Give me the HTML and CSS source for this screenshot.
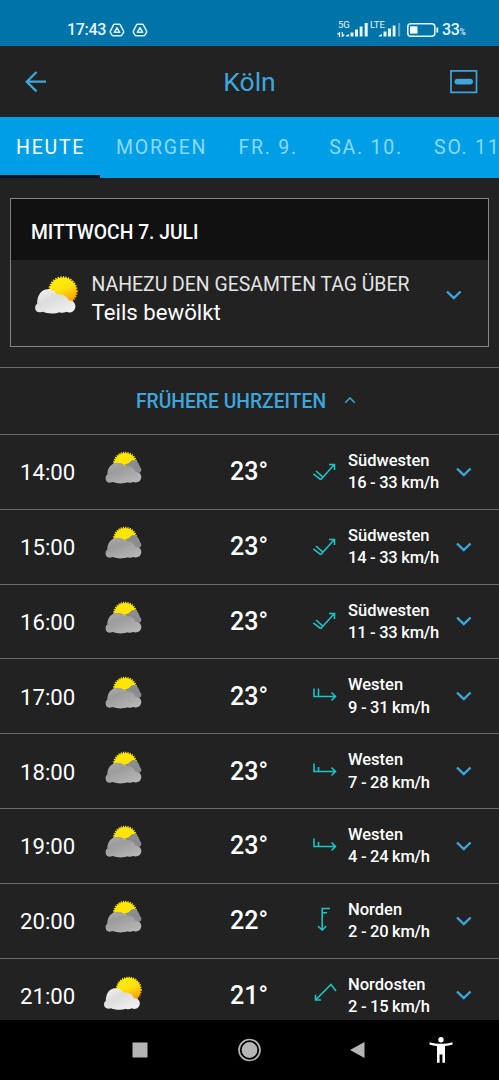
FILE: index.html
```
<!DOCTYPE html>
<html lang="de">
<head>
    <meta charset="UTF-8">
    <meta name="viewport" content="width=device-width, initial-scale=1.0">
    <title>Wetter Köln</title>
    <link rel="stylesheet" href="styles.css">
</head>
<body>

    <!-- Shared icons -->
    <svg class="icon-defs" width="0" height="0">
        <defs>
            <linearGradient id="sunFill" x1="0" y1="0" x2="0.4" y2="1">
                <stop offset="0" stop-color="#fff200"/>
                <stop offset="0.55" stop-color="#ffe010"/>
                <stop offset="1" stop-color="#ffa200"/>
            </linearGradient>
            <linearGradient id="greyCloud" x1="0" y1="0" x2="0.7" y2="1">
                <stop offset="0" stop-color="#acacac"/>
                <stop offset="0.4" stop-color="#9c9c9c"/>
                <stop offset="1" stop-color="#b6b6b6"/>
            </linearGradient>
            <linearGradient id="whiteCloud" x1="0" y1="0" x2="0.7" y2="1">
                <stop offset="0" stop-color="#f4f4f4"/>
                <stop offset="0.45" stop-color="#dcdcdc"/>
                <stop offset="1" stop-color="#f0f0f0"/>
            </linearGradient>
        </defs>
        <symbol id="cloudy" viewBox="0.3 0 40 40">
            <circle cx="22.5" cy="16" r="11" fill="#ffe600"/>
            <circle cx="22.5" cy="16" r="11.3" fill="none" stroke="#ffe600" stroke-width="1.8" stroke-dasharray="1.2 1.1"/>
            <g transform="translate(0 -0.8) scale(1 0.97)">
                <path d="M22 17.5C24.5 17.5 26.5 16.5 28 14.5C30 12.3 34 13 35.7 16.5C36.5 18 37 19.5 37.3 20.5C39.2 22.5 39 24.5 37.5 26L28 27Z" fill="#8b8c90"/>
                <path d="M8 36.5C5.5 37 3 35.3 2.9 32.5C2.8 30.5 3.4 29 4.6 28.2C4.6 21 9 16 15 16C18.5 16 21.5 17.5 23 20C27 19 31.5 21 32.7 25.5C36 25.2 38.6 27.3 38.6 30.5C38.6 34 36.3 36.4 33 36.4C32 36.4 31 36.2 30.2 35.9C28.8 36.9 26.5 37 25 36.2C21 37.8 14 37.8 10 36C9.5 36.3 8.8 36.5 8 36.5Z" fill="url(#greyCloud)"/>
            </g>
        </symbol>
        <symbol id="partly" viewBox="0 -3 40 40">
            <circle cx="25.7" cy="14.8" r="12" fill="url(#sunFill)"/>
            <circle cx="25.7" cy="14.8" r="12.3" fill="none" stroke="url(#sunFill)" stroke-width="1.7" stroke-dasharray="1.2 1.1"/>
            <path d="M6 33.7C3.2 34 1 32.3 1 29.6C1 27.8 1.7 26.6 2.8 26C2.7 18.5 6.7 13.2 12.3 13.2C16 13.2 19 15 20.3 17.7C25.3 17 29.8 19.3 30.8 23.3C34.3 22.9 36.8 25.3 36.8 28.3C36.8 31.6 34.5 33.9 31.5 33.9C30.5 33.9 29.5 33.7 28.7 33.2C27 34.4 24.5 34.5 22.8 33.7C18.5 35.2 12 35.2 8 33.3Z" fill="url(#whiteCloud)"/>
        </symbol>
        <symbol id="windSW2" viewBox="0 0 28 28">
            <path d="M10.7 21.7L24.3 6.5M19 6.5H24.5V12M10.7 21.7L3.3 15.8M12.9 19.2L6 13"/>
        </symbol>
        <symbol id="windW2" viewBox="0 0 28 28">
            <path d="M4 6.5V14.5H25.5M21.5 10.5L25.5 14.5L21.5 18.5M8.5 6.5V14.5"/>
        </symbol>
        <symbol id="windW1" viewBox="0 0 28 28">
            <path d="M4 6.5V14.5H25.5M21.5 10.5L25.5 14.5L21.5 18.5M8.5 10V14.5"/>
        </symbol>
        <symbol id="windN" viewBox="0 0 28 28">
            <path d="M20 1.5H12.2V23M8 19L12.2 23.2L16.3 19M12.2 5.7H17"/>
        </symbol>
        <symbol id="windNE" viewBox="0 0 28 28">
            <path d="M26 10L21 3.5L5.5 19M5.5 13.7V19H11"/>
        </symbol>
        <symbol id="down" viewBox="0 0 16 10">
            <path d="M1 1.5L7.8 8L14.6 1.5" fill="none" stroke="#3ea6dc" stroke-width="2.4"/>
        </symbol>
        <symbol id="drive" viewBox="0 0 16 14">
            <path d="M5.3 1.2H10.3Q10.9 1.2 11.3 1.9L14.6 8.2Q14.9 8.9 14.5 9.5L12.8 12.2Q12.4 12.8 11.7 12.8H4.1Q3.4 12.8 3 12.2L1.4 9.5Q1 8.9 1.4 8.2L4.5 1.9Q4.8 1.2 5.3 1.2Z M8 4.7L5.3 9.3H10.7Z" fill="none" stroke="#d7f0fb" stroke-width="1.5" stroke-linejoin="round"/>
        </symbol>
    </svg>

    <div class="status-bar">
        <span class="clock">17:43</span>
        <svg class="drive" width="16" height="14"><use href="#drive"/></svg>
        <svg class="drive" width="16" height="14"><use href="#drive"/></svg>
        <div class="status-right">
            <div class="signal">
                <span class="net">5G</span>
                <svg width="32" height="16" viewBox="0 0 32 16" fill="#e4f5fc">
                    <path d="M2.5 10V15M0.5 12.5L2.5 10.5M5.3 10V15M7.3 12.5L5.3 14.5" fill="none" stroke="#e4f5fc" stroke-width="1.2"/>
                    <path d="M9 14.5V13.5L12 12V14.5ZM13.5 10.5H16.5V14.5H13.5ZM18 7.5H21V14.5H18ZM22.7 4.5H25.5V14.5H22.7ZM27.7 1H30.7V14.5H27.7Z"/>
                </svg>
            </div>
            <div class="signal lte">
                <span class="net">LTE</span>
                <svg width="32" height="16" viewBox="0 0 32 16" fill="#e4f5fc">
                    <path d="M9 14.5V13.5L12 12V14.5ZM13.5 9.5H16.5V14.5H13.5ZM18 6.5H21V14.5H18ZM22.7 3.5H25.5V14.5H22.7Z"/>
                    <path d="M28 1H30.2V14.5H28Z" opacity="0.4"/>
                </svg>
            </div>
            <svg class="battery" width="32" height="14" viewBox="0 0 32 14">
                <rect x="0.8" y="0.8" width="27" height="12.4" rx="3" fill="none" stroke="#e4f5fc" stroke-width="1.6"/>
                <rect x="3" y="3.3" width="7.5" height="7.3" fill="#f4fbfe"/>
                <path d="M30.3 4.5V9.5" stroke="#e4f5fc" stroke-width="1.8"/>
            </svg>
            <span class="percent">33<small>%</small></span>
        </div>
    </div>

    <header class="header">
        <svg width="22" height="22" viewBox="0 0 22 22" fill="none" stroke="#3ea6dc" stroke-width="2.3">
            <path d="M21 10.7H2M11.5 1L1.8 10.7L11.5 20.4"/>
        </svg>
        <h1>Köln</h1>
        <svg width="28" height="24" viewBox="0 0 28 24">
            <rect x="1" y="0.9" width="25.5" height="21.5" fill="none" stroke="#3ea6dc" stroke-width="1.7"/>
            <rect x="4.5" y="8.7" width="18.5" height="5.8" rx="2.9" fill="#3ea6dc"/>
        </svg>
    </header>

    <nav class="tabs">
        <a class="tab active">HEUTE</a>
        <a class="tab">MORGEN</a>
        <a class="tab">FR. 9.</a>
        <a class="tab">SA. 10.</a>
        <a class="tab">SO. 11</a>
    </nav>

    <main>
        <section class="day-card">
            <h2>MITTWOCH 7. JULI</h2>
            <div class="summary">
                <svg class="day-icon" width="45" height="45"><use href="#partly"/></svg>
                <div class="summary-text">
                    <div class="period">NAHEZU DEN GESAMTEN TAG ÜBER</div>
                    <div class="condition">Teils bewölkt</div>
                </div>
                <svg class="chevron" width="16" height="10"><use href="#down"/></svg>
            </div>
        </section>

        <div class="earlier">
            <span>FRÜHERE UHRZEITEN</span>
            <svg width="12" height="8" viewBox="0 0 12 8" fill="none" stroke="#3ea6dc" stroke-width="1.5"><path d="M1.2 5.8L6 1L10.8 5.8"/></svg>
        </div>

        <div class="hours">
            <div class="hour">
                <span class="time">14:00</span>
                <svg class="weather" width="40" height="40"><use href="#cloudy"/></svg>
                <span class="temp">23°</span>
                <svg class="wind-icon" width="28" height="28"><use href="#windSW2"/></svg>
                <div class="wind">Südwesten<br><span class="speed">16 - 33 km/h</span></div>
                <svg class="chevron" width="16" height="10"><use href="#down"/></svg>
            </div>
            <div class="hour">
                <span class="time">15:00</span>
                <svg class="weather" width="40" height="40"><use href="#cloudy"/></svg>
                <span class="temp">23°</span>
                <svg class="wind-icon" width="28" height="28"><use href="#windSW2"/></svg>
                <div class="wind">Südwesten<br><span class="speed">14 - 33 km/h</span></div>
                <svg class="chevron" width="16" height="10"><use href="#down"/></svg>
            </div>
            <div class="hour">
                <span class="time">16:00</span>
                <svg class="weather" width="40" height="40"><use href="#cloudy"/></svg>
                <span class="temp">23°</span>
                <svg class="wind-icon" width="28" height="28"><use href="#windSW2"/></svg>
                <div class="wind">Südwesten<br><span class="speed">11 - 33 km/h</span></div>
                <svg class="chevron" width="16" height="10"><use href="#down"/></svg>
            </div>
            <div class="hour">
                <span class="time">17:00</span>
                <svg class="weather" width="40" height="40"><use href="#cloudy"/></svg>
                <span class="temp">23°</span>
                <svg class="wind-icon" width="28" height="28"><use href="#windW2"/></svg>
                <div class="wind">Westen<br><span class="speed">9 - 31 km/h</span></div>
                <svg class="chevron" width="16" height="10"><use href="#down"/></svg>
            </div>
            <div class="hour">
                <span class="time">18:00</span>
                <svg class="weather" width="40" height="40"><use href="#cloudy"/></svg>
                <span class="temp">23°</span>
                <svg class="wind-icon" width="28" height="28"><use href="#windW1"/></svg>
                <div class="wind">Westen<br><span class="speed">7 - 28 km/h</span></div>
                <svg class="chevron" width="16" height="10"><use href="#down"/></svg>
            </div>
            <div class="hour">
                <span class="time">19:00</span>
                <svg class="weather" width="40" height="40"><use href="#cloudy"/></svg>
                <span class="temp">23°</span>
                <svg class="wind-icon" width="28" height="28"><use href="#windW1"/></svg>
                <div class="wind">Westen<br><span class="speed">4 - 24 km/h</span></div>
                <svg class="chevron" width="16" height="10"><use href="#down"/></svg>
            </div>
            <div class="hour">
                <span class="time">20:00</span>
                <svg class="weather" width="40" height="40"><use href="#cloudy"/></svg>
                <span class="temp">22°</span>
                <svg class="wind-icon" width="28" height="28"><use href="#windN"/></svg>
                <div class="wind">Norden<br><span class="speed">2 - 20 km/h</span></div>
                <svg class="chevron" width="16" height="10"><use href="#down"/></svg>
            </div>
            <div class="hour">
                <span class="time">21:00</span>
                <svg class="weather" width="40" height="40"><use href="#partly"/></svg>
                <span class="temp">21°</span>
                <svg class="wind-icon" width="28" height="28"><use href="#windNE"/></svg>
                <div class="wind">Nordosten<br><span class="speed">2 - 15 km/h</span></div>
                <svg class="chevron" width="16" height="10"><use href="#down"/></svg>
            </div>
        </div>
    </main>

    <!-- System navigation -->
    <footer class="nav-bar">
        <svg width="24" height="26" viewBox="0 0 24 26"><rect x="4.5" y="5.5" width="15" height="15" fill="#b5b5b5"/></svg>
        <svg width="24" height="26" viewBox="0 0 24 26">
            <circle cx="12.5" cy="13" r="10.5" fill="none" stroke="#b5b5b5" stroke-width="1.7"/>
            <circle cx="12.5" cy="13" r="7.9" fill="#b5b5b5"/>
        </svg>
        <svg width="24" height="26" viewBox="0 0 24 26"><path d="M4 13L18.5 5V21Z" fill="#b5b5b5"/></svg>
        <svg class="accessibility" width="24" height="26" viewBox="0 0 24 26" fill="#fff">
            <circle cx="12" cy="2.8" r="2.7"/>
            <path d="M0.7 5.3C8 7.3 16 7.3 23.3 5.3L23.7 7.5C21 8.2 18.5 8.7 16 8.9V25.8H13.4V17.5H10.6V25.8H8V8.9C5.5 8.7 3 8.2 0.3 7.5Z"/>
        </svg>
    </footer>

</body>
</html>
```
FILE: styles.css
```
* {
    box-sizing: border-box;
}
body {
    font-family: Roboto, 'Liberation Sans', sans-serif;
    background-color: #222222;
    color: #ffffff;
    margin: 0;
    height: 1080px;
    overflow: hidden;
    display: flex;
    flex-direction: column;
}
svg {
    display: block;
    flex-shrink: 0;
}
.icon-defs {
    position: absolute;
}
.status-bar {
    height: 46px;
    padding: 13px 32px 0 67px;
    background-color: #0074a9;
    color: #e4f5fc;
    display: flex;
    align-items: center;
    flex-shrink: 0;
}
.clock {
    font-size: 16px;
    font-weight: 500;
    letter-spacing: -0.3px;
    width: 42px;
}
.drive {
    margin-right: 7px;
}
.status-right {
    margin-left: auto;
    display: flex;
    align-items: center;
}
.signal {
    position: relative;
    width: 32px;
}
.signal.lte {
    margin-left: 1px;
}
.net {
    position: absolute;
    left: 1px;
    top: -3px;
    font-size: 9.5px;
    line-height: 12px;
}
.lte .net {
    left: 0;
}
.battery {
    margin-left: 5px;
}
.percent {
    font-size: 16px;
    font-weight: 500;
    letter-spacing: -0.3px;
    margin-left: 3px;
    width: 25px;
    white-space: nowrap;
}
.percent small {
    font-size: 8.5px;
}
.header {
    height: 71px;
    padding: 0 21px 0 25px;
    display: flex;
    align-items: center;
    justify-content: space-between;
    flex-shrink: 0;
}
.header h1 {
    margin: 0 0 0 2px;
    font-size: 26.5px;
    font-weight: 400;
    color: #3ea6dc;
}
.tabs {
    height: 61px;
    background-color: #009fe5;
    display: flex;
    overflow: hidden;
    flex-shrink: 0;
}
.tab {
    flex-shrink: 0;
    padding: 1px 15.3px 0 16px;
    line-height: 60px;
    font-size: 19.5px;
    letter-spacing: 1.75px;
    color: #8ad9f8;
}
.tab.active {
    width: 100px;
    padding-right: 0;
    color: #ffffff;
    border-bottom: 3px solid #0a0f20;
}
main {
    flex: 1;
    min-height: 0;
    overflow: hidden;
}
.day-card {
    margin: 20px 10px;
    height: 149px;
    border: 1px solid #858585;
}
.day-card h2 {
    margin: 0;
    padding-left: 20px;
    height: 61px;
    line-height: 68px;
    background-color: #111111;
    font-size: 19.3px;
    font-weight: 500;
}
.summary {
    display: flex;
    padding: 12px 27px 0 23px;
}
.day-icon {
    margin-top: -1px;
}
.summary-text {
    flex: 1;
    margin-left: 12.6px;
}
.period {
    font-size: 19.4px;
    line-height: 25px;
    color: #e4e4e4;
    white-space: nowrap;
}
.condition {
    font-size: 22.2px;
    line-height: 31px;
}
.summary .chevron {
    margin-top: 18px;
    margin-right: -0.5px;
}
.earlier {
    height: 67px;
    border-top: 1px solid #6a6a6a;
    display: flex;
    align-items: center;
    justify-content: center;
    gap: 18px;
    font-size: 19.3px;
    font-weight: 500;
    color: #3ea6dc;
    padding-right: 7px;
}
.hour {
    height: 74.8px;
    border-top: 1px solid #6a6a6a;
    display: grid;
    grid-template-columns: 83px 127px 80px 38px 108px 16px;
    align-items: center;
    padding-left: 20px;
}
.time {
    font-size: 22.2px;
    padding-top: 1px;
}
.weather {
    margin-top: -7px;
}
.temp {
    font-size: 25px;
    font-weight: 500;
}
.wind-icon {
    fill: none;
    stroke: #1cc5c5;
    stroke-width: 1.6;
}
.wind {
    font-size: 16.5px;
    line-height: 22.4px;
    font-weight: 500;
    padding-top: 1px;
}
.speed {
    letter-spacing: -0.2px;
    word-spacing: -0.2px;
}
.nav-bar {
    height: 60px;
    background-color: #000000;
    display: flex;
    align-items: center;
    gap: 85px;
    padding-left: 128px;
    flex-shrink: 0;
}
.accessibility {
    margin-left: -26px;
}
```
